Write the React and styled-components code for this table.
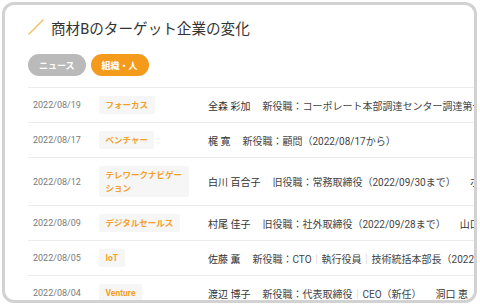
import styled, { createGlobalStyle } from "styled-components";

const GlobalStyle = createGlobalStyle`
    html, body {
        margin: 0;
        padding: 0;
        background: #ffffff;
    }
    body {
        font-family: "Roboto", "Noto Sans CJK JP", sans-serif;
    }
`

const Page = styled.div`
    width: 480px;
    height: 306px;
    padding: 2px 3px 3px 2px;
    box-sizing: border-box;
`

const Card = styled.div`
    width: 100%;
    height: 100%;
    box-sizing: border-box;
    border: 3px solid #d2d2d2;
    border-radius: 12px;
    background: #ffffff;
    overflow: hidden;
    padding: 11px 0 0 23px;
`

const TitleRow = styled.div`
    display: flex;
    align-items: center;
    gap: 7px;
    height: 22px;
`

const Title = styled.h1`
    margin: 0;
    font-size: 14.6px;
    font-weight: 400;
    color: #333333;
`

const Pills = styled.div`
    display: flex;
    gap: 5px;
    margin-top: 16px;
`

const Pill = styled.div`
    height: 22px;
    padding: 0 11px;
    border-radius: 11px;
    display: flex;
    align-items: center;
    font-size: 9px;
    font-weight: 700;
    color: #ffffff;
    background: ${(p) => (p.$active ? "#f59b1c" : "#bababa")};
`

const List = styled.div`
    margin-top: 11px;
    border-top: 1px solid #ececec;
`

const Row = styled.div`
    display: grid;
    grid-template-columns: 66px 109px max-content;
    align-items: center;
    padding: 8px 0 8px 5px;
    border-bottom: 1px solid #ececec;
    white-space: nowrap;
`

const Date = styled.div`
    font-size: 9px;
    color: #7a7a7a;
`

const Tag = styled.div`
    justify-self: start;
    max-width: 90px;
    box-sizing: border-box;
    padding: 2.5px 6.5px;
    background: #f6f6f6;
    border-radius: 2px;
    font-size: 8.5px;
    line-height: 13px;
    font-weight: 700;
    color: #f2a02a;
    white-space: normal;
`

const People = styled.div`
    display: flex;
    gap: 14px;
    font-size: 10px;
    color: #444444;
`

const Person = styled.div`
    display: flex;
    gap: 12px;
`

const Name = styled.span`
    color: #333333;
`

const Sep = styled.span`
    color: #c4c4c4;
`

function Role({ text }) {
    const parts = text.split("｜");
    return (
        <span>
            {parts.map((p, i) => (
                <span key={i}>
                    {i > 0 && <Sep>｜</Sep>}
                    {p}
                </span>
            ))}
        </span>
    );
}

const rows = [
    {
        date: "2022/08/19",
        tag: "フォーカス",
        people: [["全森 彩加", "新役職：コーポレート本部調達センター調達第一部長"]],
    },
    {
        date: "2022/08/17",
        tag: "ベンチャー",
        people: [["梶 寛", "新役職：顧問（2022/08/17から）"]],
    },
    {
        date: "2022/08/12",
        tag: "テレワークナビゲーション",
        people: [
            ["白川 百合子", "旧役職：常務取締役（2022/09/30まで）"],
            ["ホール 直樹", "新役職：取締役"],
        ],
    },
    {
        date: "2022/08/09",
        tag: "デジタルセールス",
        people: [
            ["村尾 佳子", "旧役職：社外取締役（2022/09/28まで）"],
            ["山口 智子", "新役職：社外取締役"],
        ],
    },
    {
        date: "2022/08/05",
        tag: "IoT",
        people: [["佐藤 薫", "新役職：CTO｜執行役員｜技術統括本部長（2022/08/05から）"]],
    },
    {
        date: "2022/08/04",
        tag: "Venture",
        people: [
            ["渡辺 博子", "新役職：代表取締役｜CEO（新任）"],
            ["洞口 恵", "旧役職：取締役"],
        ],
    },
];

function App() {
    return (
        <>
            <GlobalStyle />
            <Page>
                <Card>
                    <TitleRow>
                        <svg width="16" height="16" viewBox="0 0 16 16">
                            <line x1="0.5" y1="15.5" x2="15.5" y2="0.5" stroke="#f3c066" strokeWidth="1.5" />
                        </svg>
                        <Title>商材Bのターゲット企業の変化</Title>
                    </TitleRow>
                    <Pills>
                        <Pill>ニュース</Pill>
                        <Pill $active>組織・人</Pill>
                    </Pills>
                    <List>
                        {rows.map((r) => (
                            <Row key={r.date}>
                                <Date>{r.date}</Date>
                                <div>
                                    <Tag>{r.tag}</Tag>
                                </div>
                                <People>
                                    {r.people.map(([name, role]) => (
                                        <Person key={name}>
                                            <Name>{name}</Name>
                                            <Role text={role} />
                                        </Person>
                                    ))}
                                </People>
                            </Row>
                        ))}
                    </List>
                </Card>
            </Page>
        </>
    );
}

export default App;
